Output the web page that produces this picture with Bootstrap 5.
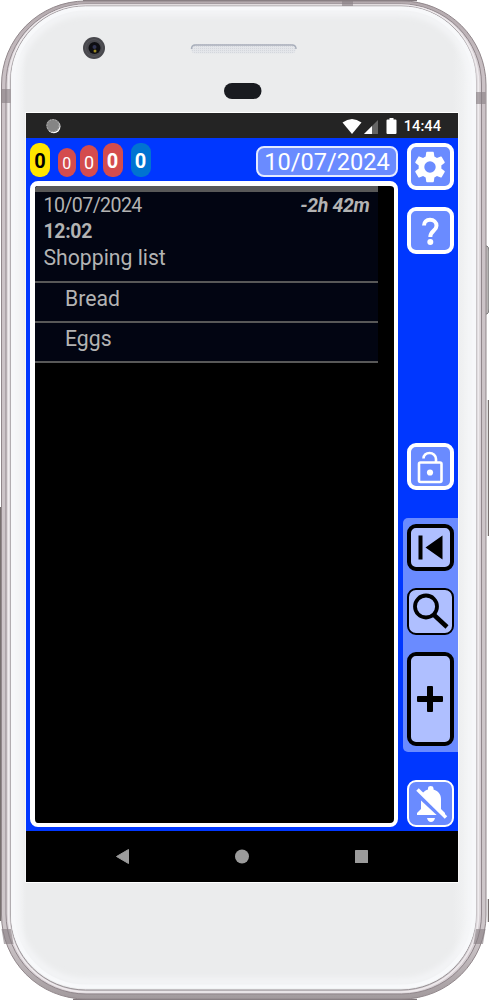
<!DOCTYPE html>
<html lang="en">
<head>
<meta charset="utf-8">
<meta name="viewport" content="width=device-width, initial-scale=1">
<title>Shopping list</title>
<link href="https://cdn.jsdelivr.net/npm/bootstrap@5.3.0/dist/css/bootstrap.min.css" rel="stylesheet">
<style>
body{font-family:Roboto,"Liberation Sans",sans-serif;background:#fff;overflow:hidden}
svg{display:block}
.phone{width:489px;height:1000px;padding:113px 31px 118px 26px}
.chassis{z-index:0}
.screen{z-index:1;background:#000}
.statusbar{height:25px;background:#242424;color:#fff;padding:0 17px 0 20px;font-size:14.7px;font-weight:500;line-height:26px}
.app{background:#0037ff;padding:4px 0 4px 4px}
.topbar{height:39px}
.pills{margin-top:1px}
.pill{border-radius:9px;color:#fff;line-height:1;display:flex;align-items:flex-end;justify-content:center}
.pill-y{width:20px;height:34px;background:#ffe500;color:#000;font-size:20px;font-weight:700;padding-bottom:6px;margin-right:8px}
.pill-r{background:#d44c4d;padding-bottom:5px;margin-right:4.3px}
.pill-b{width:20px;height:34px;background:#0073d1;font-size:20px;font-weight:700;padding-bottom:6px}
.datebox{width:142px;height:31px;margin-top:4px;border:2px solid #e4eaff;border-radius:8px;background:#6a8bff;color:#fff;font-size:23.6px;line-height:29px;text-align:center;white-space:nowrap}
.listbox{width:368px;height:646px;border:solid #fff;border-width:5px 4px 4px 5px;border-radius:8px;background:#000;overflow:hidden}
.entry{width:343px;color:#b3b3b3;background:#020512;border-top:6px solid #585858;font-size:21.2px}
.entry-head{height:91px;padding:1px 8.5px 0;border-bottom:2px solid #585858;line-height:26px}
.stamp{font-size:19.4px;letter-spacing:-.3px}
.stamp-date{font-size:19.6px;letter-spacing:-.6px}
.entry-item{height:40px;padding-left:30px;border-bottom:2px solid #585858;line-height:31px}
.rail{width:55px;padding-top:1px}
.tool{width:47px;height:47px;margin-left:4px;padding:0;border-radius:9px;border:4px solid #fff;background:#6a8bff;color:#fff;display:flex;align-items:center;justify-content:center}
.tool svg{margin-left:-1px}
.thin{border-width:2px}
.tool-dark{border-color:#000;background:#afbfff;color:#000}
.group{height:234px;background:#6a8bff;border-radius:5px 0 0 5px;padding-top:6px}
.navkeys{height:51px}
</style>
</head>
<body>
<div class="phone position-relative d-flex flex-column">
 <svg class="chassis position-absolute top-0 start-0" width="489" height="1000" viewBox="0 0 489 1000">
  <defs>
   <linearGradient id="plate" x1="0" x2="1"><stop offset="0" stop-color="#f8f9fa"/><stop offset=".035" stop-color="#ebeced"/><stop offset=".95" stop-color="#ebeced"/><stop offset="1" stop-color="#f6f7f8"/></linearGradient>
   <linearGradient id="metal" x1="0" x2="0" y1="0" y2="1"><stop offset="0" stop-color="#b3a9ad"/><stop offset=".08" stop-color="#cbc2c6"/><stop offset=".94" stop-color="#cdc6c9"/><stop offset="1" stop-color="#a29a9d"/></linearGradient>
   <pattern id="mesh" width="2" height="2" patternUnits="userSpaceOnUse"><rect width="2" height="2" fill="#e4e6ea"/><rect width="1" height="1" fill="#d4d7dd"/></pattern>
   <filter id="soft"><feGaussianBlur stdDeviation="3"/></filter>
  </defs>
  <path d="M83 .5H417M73 999.500H417" stroke="#81787c" stroke-width="1.500"/>
  <path d="M.5 507V921M488.500 400V536M488.500 899V922" stroke="#77706f" stroke-width="1.500"/>
  <path d="M485 246h2q2 1 2 5v58q0 4-2 5h-2z" fill="#b8b5b5" stroke="#777"/>
  <rect x="1.500" y="1" width="484.500" height="998" rx="84" fill="url(#metal)" stroke="#91878b"/>
  <rect x="6" y="4" width="475.500" height="990" rx="80" fill="#d7d0d4" stroke="#8f858a"/>
  <rect x="8.500" y="5" width="470" height="987" rx="78" fill="none" stroke="#eee9ec" stroke-width="1.500"/>
  <rect x="10.500" y="6" width="465.500" height="984" rx="75" fill="url(#plate)" stroke="#918a8e"/>
  <rect x="13" y="8.500" width="461" height="978" rx="73" fill="none" stroke="#f8f9fb" stroke-width="4"/>
  <rect x="15" y="12" width="457" height="970" rx="72" fill="none" stroke="#f6f7f9" stroke-width="6" filter="url(#soft)"/>
  <path d="M1.500 89h9v14h-9zM476 92h9.500v12H476zM342 1h11v5h-11zM1.500 929h9.500l2.500 15H4zM476 929h9.500l-2.500 15h-9.500z" fill="#8a8185" fill-opacity=".65"/>
  <circle cx="94" cy="48" r="11" fill="#48484d"/><circle cx="94" cy="48" r="8.500" fill="none" stroke="#55555a"/>
  <circle cx="94.500" cy="48" r="6" fill="#0e0e12"/><circle cx="94.500" cy="47" r="2" fill="#303350"/><circle cx="95" cy="51" r="1.500" fill="#9b8a21"/>
  <rect x="191" y="44" width="105" height="9.500" rx="4.500" fill="url(#mesh)"/><path d="M191.500 49q0-4 4-4H292q4 0 4 4" fill="none" stroke="#a9afbb" stroke-width="1.500"/>
  <rect x="224" y="83" width="37.500" height="16" rx="8" fill="#191b20"/>
  <rect x="25.500" y="112" width="433" height="771" fill="#fff"/>
 </svg>
 <main class="screen position-relative d-flex flex-column flex-grow-1">
  <div class="statusbar d-flex align-items-center">
   <svg width="15" height="16" viewBox="0 0 15 16"><circle cx="7.800" cy="8.500" r="6.700" fill="#fff"/><circle cx="7" cy="7.600" r="6.700" fill="#858585"/><circle cx="7" cy="7.600" r="6" fill="none" stroke="#b2b2b2" stroke-dasharray="1.500 1.500"/></svg>
   <svg class="ms-auto" width="62" height="18" viewBox="0 0 62 18"><path d="M.5 5.500Q10-1.500 19.500 5.500L10 17z" fill="#fff"/><path d="M22 17L36 3v14z" fill="#666"/><path d="M22 17l8-8v8z" fill="#fff"/><path d="M47 2.500h2V1h4v1.500h2q1 0 1 1V16q0 1-1 1h-8q-1 0-1-1V3.500q0-1 1-1z" transform="translate(-1.500 0)" fill="#fff"/></svg>
   <span>14:44</span>
  </div>
  <div class="app d-flex flex-grow-1">
   <section class="d-flex flex-column">
    <div class="topbar d-flex">
     <div class="pills d-flex align-items-end align-self-start">
      <span class="pill pill-y">0</span>
      <span class="pill pill-r" style="width:17.5px;height:29px;font-size:16px">0</span>
      <span class="pill pill-r" style="width:18.5px;height:32px;font-size:18px">0</span>
      <span class="pill pill-r fw-bold me-2" style="width:20px;height:34px;font-size:20px;padding-bottom:6px">0</span>
      <span class="pill pill-b">0</span>
     </div>
     <div class="datebox ms-auto">10/07/2024</div>
    </div>
    <div class="listbox">
     <article class="entry">
      <div class="entry-head">
       <div class="d-flex justify-content-between"><span class="stamp-date">10/07/2024</span><b class="stamp"><i>-2h 42m</i></b></div>
       <div class="stamp"><b>12:02</b></div>
       <div>Shopping list</div>
      </div>
      <div class="entry-item">Bread</div>
      <div class="entry-item">Eggs</div>
     </article>
    </div>
   </section>
   <aside class="rail d-flex flex-column ms-auto">
    <button class="tool"><svg width="38" height="38" viewBox="0 0 24 24" fill="currentColor"><path d="M19.140 12.940c.04-.3.060-.61.060-.94s-.02-.64-.07-.94l2.030-1.580a.49.490 0 0 0 .12-.61l-1.920-3.320a.49.490 0 0 0-.59-.22l-2.390.96a7 7 0 0 0-1.620-.94l-.36-2.540a.48.480 0 0 0-.48-.41h-3.840a.48.480 0 0 0-.47.410l-.36 2.540c-.59.240-1.130.57-1.620.94l-2.390-.96a.48.480 0 0 0-.59.220L2.740 8.870a.48.480 0 0 0 .12.610l2.030 1.580a6 6 0 0 0 0 1.880l-2.030 1.580a.49.490 0 0 0-.12.610l1.920 3.320c.12.220.37.290.59.220l2.390-.96c.5.380 1.030.7 1.620.94l.36 2.540c.05.240.24.410.48.410h3.840c.24 0 .44-.17.470-.41l.36-2.540c.59-.24 1.130-.56 1.620-.94l2.390.96c.22.080.47 0 .59-.22l1.920-3.320a.48.480 0 0 0-.12-.61zM12 15.600a3.600 3.600 0 1 1 0-7.200 3.600 3.600 0 0 1 0 7.200z"/></svg></button>
    <button class="tool" style="margin-top:17px"><svg width="38" height="38" viewBox="0 0 38 38" fill="none" stroke="currentColor" stroke-width="4"><path d="M13 13.500C13 10 15.300 7.800 19 7.800s6.500 2.400 6.500 6c0 5-6.200 5.200-6.200 11.200"/><circle cx="19.300" cy="30" r="3" fill="currentColor" stroke="none"/></svg></button>
    <button class="tool" style="margin-top:189px"><svg width="38" height="38" viewBox="0 0 38 38" fill="none" stroke="currentColor" stroke-width="2.600"><rect x="8" y="14.500" width="22.500" height="19.500" rx="1.500"/><path d="M12.500 10.500C12.500 7 15 5 18.500 5s6.500 2.500 6.500 6v4"/><circle cx="19" cy="24.500" r="3.100" fill="currentColor" stroke="none"/></svg></button>
    <div class="group" style="margin-top:28px">
     <button class="tool tool-dark"><svg width="39" height="39" viewBox="0 0 39 39" fill="currentColor"><path d="M7.500 7.500h4v24h-4zM14.500 19.500l17-12v24z"/></svg></button>
     <button class="tool tool-dark thin" style="margin-top:17px"><svg width="43" height="43" viewBox="0 0 43 43" fill="none" stroke="currentColor"><circle cx="17" cy="16.500" r="11" stroke-width="3.800"/><path d="M24.500 24.500L38 37" stroke-width="4.500"/></svg></button>
     <button class="tool tool-dark" style="height:94px;margin-top:17px"><svg width="28" height="28" viewBox="0 0 28 28" fill="currentColor"><rect x="1" y="11" width="26" height="6" rx="1"/><rect x="11" y="1" width="6" height="26" rx="1"/></svg></button>
    </div>
    <button class="tool thin" style="margin-top:28px"><svg width="43" height="43" viewBox="0 0 43 43"><path d="M8 33v-2l4-4V17c0-5 3-8.500 7-9.500V6q0-2 2.700-2T24.500 6v1.500c5 1.500 7.500 5 7.500 9.500v10l4 4v2zM18 36h8q-1 4-4 4t-4-4z" fill="#fff"/><path d="M7 10.500L35.500 37" stroke="#6a8bff" stroke-width="5"/><path d="M8.500 7.500L37 35.500" stroke="#fff" stroke-width="3.500"/></svg></button>
   </aside>
  </div>
  <div class="navkeys"><svg width="432" height="51" viewBox="0 0 432 51" fill="#9b9b9b"><path d="M90.500 25.500L102.500 18.500V32.500z" stroke="#9b9b9b" stroke-linejoin="round"/><circle cx="216" cy="25.500" r="7"/><rect x="329" y="19" width="13" height="13" rx=".5"/></svg></div>
 </main>
</div>
<script src="https://cdn.jsdelivr.net/npm/bootstrap@5.3.0/dist/js/bootstrap.bundle.min.js"></script>
</body>
</html>
